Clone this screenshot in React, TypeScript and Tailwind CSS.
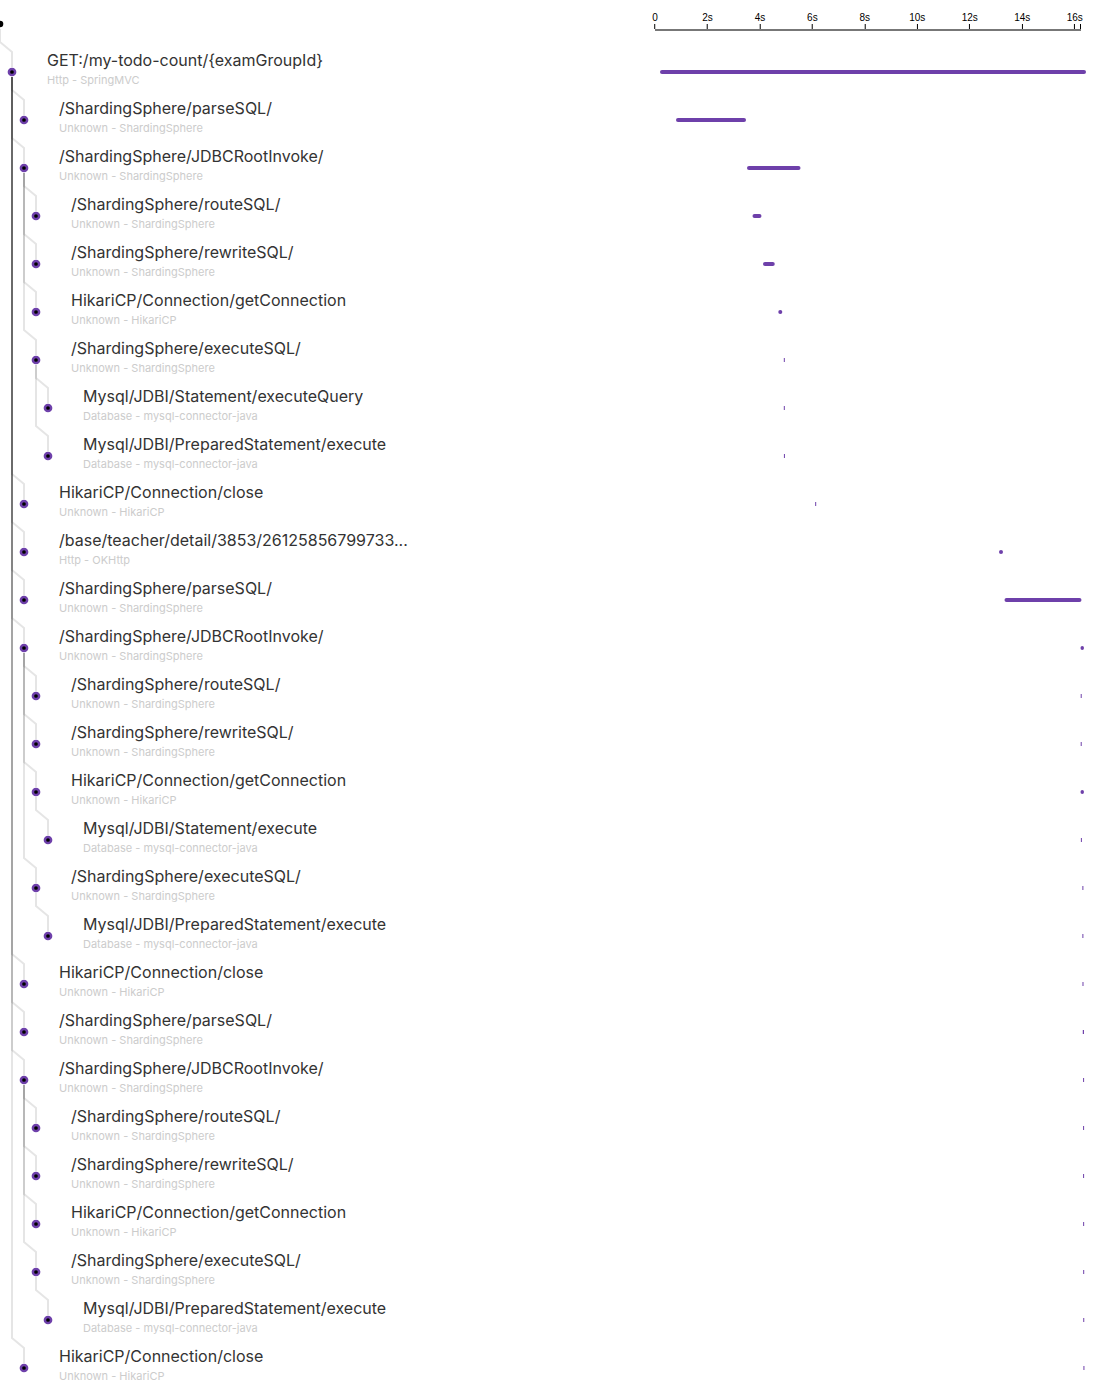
type Span = {
  depth: number;
  name: string;
  layer: string;
  start: number;
  length: number;
};

const TOTAL_MS = 16240;
const ROW = 48;
const INDENT = 12;

const sphere = "Unknown - ShardingSphere";
const hikari = "Unknown - HikariCP";
const mysql = "Database - mysql-connector-java";

const spans: Span[] = [
  { depth: 1, name: "GET:/my-todo-count/{examGroupId}", layer: "Http - SpringMVC", start: 0, length: 16240 },
  { depth: 2, name: "/ShardingSphere/parseSQL/", layer: sphere, start: 610, length: 2669 },
  { depth: 2, name: "/ShardingSphere/JDBCRootInvoke/", layer: sphere, start: 3317, length: 2040 },
  { depth: 3, name: "/ShardingSphere/routeSQL/", layer: sphere, start: 3526, length: 343 },
  { depth: 3, name: "/ShardingSphere/rewriteSQL/", layer: sphere, start: 3927, length: 448 },
  { depth: 3, name: "HikariCP/Connection/getConnection", layer: hikari, start: 4509, length: 153 },
  { depth: 3, name: "/ShardingSphere/executeSQL/", layer: sphere, start: 4720, length: 38 },
  { depth: 4, name: "Mysql/JDBI/Statement/executeQuery", layer: mysql, start: 4720, length: 38 },
  { depth: 4, name: "Mysql/JDBI/PreparedStatement/execute", layer: mysql, start: 4724, length: 38 },
  { depth: 2, name: "HikariCP/Connection/close", layer: hikari, start: 5916, length: 38 },
  { depth: 2, name: "/base/teacher/detail/3853/26125856799733...", layer: "Http - OKHttp", start: 12923, length: 153 },
  { depth: 2, name: "/ShardingSphere/parseSQL/", layer: sphere, start: 13133, length: 2935 },
  { depth: 2, name: "/ShardingSphere/JDBCRootInvoke/", layer: sphere, start: 16030, length: 134 },
  { depth: 3, name: "/ShardingSphere/routeSQL/", layer: sphere, start: 16038, length: 38 },
  { depth: 3, name: "/ShardingSphere/rewriteSQL/", layer: sphere, start: 16038, length: 38 },
  { depth: 3, name: "HikariCP/Connection/getConnection", layer: hikari, start: 16030, length: 134 },
  { depth: 4, name: "Mysql/JDBI/Statement/execute", layer: mysql, start: 16045, length: 38 },
  { depth: 3, name: "/ShardingSphere/executeSQL/", layer: sphere, start: 16102, length: 38 },
  { depth: 4, name: "Mysql/JDBI/PreparedStatement/execute", layer: mysql, start: 16102, length: 38 },
  { depth: 2, name: "HikariCP/Connection/close", layer: hikari, start: 16106, length: 38 },
  { depth: 2, name: "/ShardingSphere/parseSQL/", layer: sphere, start: 16117, length: 46 },
  { depth: 2, name: "/ShardingSphere/JDBCRootInvoke/", layer: sphere, start: 16129, length: 38 },
  { depth: 3, name: "/ShardingSphere/routeSQL/", layer: sphere, start: 16129, length: 38 },
  { depth: 3, name: "/ShardingSphere/rewriteSQL/", layer: sphere, start: 16129, length: 38 },
  { depth: 3, name: "HikariCP/Connection/getConnection", layer: hikari, start: 16131, length: 38 },
  { depth: 3, name: "/ShardingSphere/executeSQL/", layer: sphere, start: 16133, length: 38 },
  { depth: 4, name: "Mysql/JDBI/PreparedStatement/execute", layer: mysql, start: 16135, length: 38 },
  { depth: 2, name: "HikariCP/Connection/close", layer: hikari, start: 16142, length: 38 },
];

const ticks = [0, 2, 4, 6, 8, 10, 12, 14, 16];

const percent = (ms: number) => `${(ms / TOTAL_MS) * 100}%`;
const nodeX = (depth: number) => depth * INDENT;
const nodeY = (index: number) => ROW * (index + 1) + ROW / 2;

function parentOf(index: number): { x: number; y: number } {
  for (let i = index - 1; i >= 0; i--) {
    if (spans[i].depth < spans[index].depth) {
      return { x: nodeX(spans[i].depth), y: nodeY(i) };
    }
  }
  return { x: 0, y: ROW / 2 };
}

function Tree() {
  return (
    <svg aria-hidden="true" className="pointer-events-none absolute left-0 top-0 h-full w-14">
      <circle cx={0} cy={ROW / 2} r={3.3} fill="#000" />
      {spans.map((span, i) => {
        const from = parentOf(i);
        const x = nodeX(span.depth);
        const y = nodeY(i);
        return (
          <path
            key={i}
            d={`M${from.x} ${from.y + 5}V${y - 30}L${x} ${y - 20}V${y - 5}`}
            fill="none"
            stroke="#000"
            strokeOpacity={0.1}
            strokeWidth={2}
          />
        );
      })}
      {spans.map((span, i) => (
        <circle
          key={i}
          cx={nodeX(span.depth)}
          cy={nodeY(i)}
          r={3.1}
          fill="#000"
          stroke="#6e40aa"
          strokeWidth={2.5}
        />
      ))}
    </svg>
  );
}

function Axis() {
  return (
    <div className="relative -ml-[5px] mr-[19px] h-[31px] border-b-2 border-[#777] font-['Liberation_Sans',sans-serif]">
      {ticks.map((t) => (
        <div
          key={t}
          className="absolute bottom-0 flex -translate-x-1/2 flex-col items-center"
          style={{ left: percent(t * 1000) }}
        >
          <span className="text-[10px] leading-3 text-black">{t === 0 ? "0" : `${t}s`}</span>
          <span className="h-[5px] w-px bg-black" />
        </div>
      ))}
      <span className="absolute bottom-0 right-0 h-[5px] w-px bg-black" />
    </div>
  );
}

function Row({ span }: { span: Span }) {
  return (
    <li className="grid h-12 grid-cols-[3fr_2fr]">
      <div className="min-w-0 whitespace-nowrap" style={{ paddingLeft: 35 + nodeX(span.depth) }}>
        <p className="text-base leading-6 text-[#333]">{span.name}</p>
        <p className="text-[11px] leading-4 text-[#ccc]">{span.layer}</p>
      </div>
      <div className="flex items-center pr-3.5">
        <svg aria-hidden="true" className="h-1 w-full overflow-visible">
          <rect
            x={percent(span.start)}
            y={0}
            width={percent(span.length)}
            height={4}
            rx={span.length > 100 ? 2 : 0}
            fill="#6e40aa"
          />
        </svg>
      </div>
    </li>
  );
}

export default function App() {
  return (
    <main className="relative w-full overflow-hidden bg-white font-['Inter',sans-serif]">
      <header className="grid h-12 grid-cols-[3fr_2fr]">
        <div />
        <Axis />
      </header>
      <ul>
        {spans.map((span, i) => (
          <Row key={i} span={span} />
        ))}
      </ul>
      <Tree />
    </main>
  );
}
